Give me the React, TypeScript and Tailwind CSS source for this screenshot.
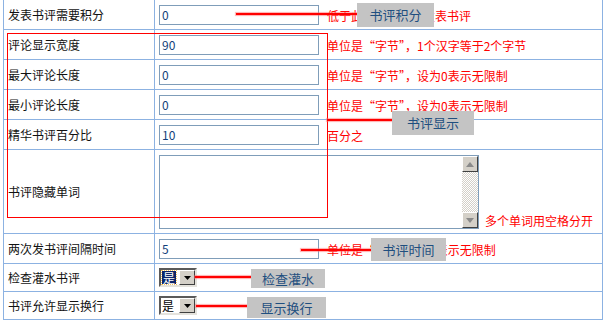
import React from "react";

const FONT = "font-['SimSun','Noto_Sans_CJK_SC',sans-serif]";

function TextInput({ value }: { value: string }) {
  return (
    <div className="flex h-[20px] w-[160px] items-center border border-[#7f9db9] bg-white pl-[2px] text-[12px] leading-[14px] text-[#123f7a]">
      {value}
    </div>
  );
}

function Hint({ children }: { children: React.ReactNode }) {
  return <span className="ml-[8px] whitespace-nowrap pt-[3px] text-[12px] leading-[14px] text-[#ff0000]">{children}</span>;
}

function Select({ focused }: { focused?: boolean }) {
  return (
    <div className="flex h-[19px] w-[38px] border-2 border-t-[#5a5a5a] border-l-[#5a5a5a] border-r-[#e4e2dc] border-b-[#e4e2dc] bg-white">
      <div className="flex flex-1 items-center pl-[1px]">
        {focused ? (
          <span className="flex h-[13px] items-center bg-[#0a246a] px-[1px] text-[12px] leading-[12px] text-white outline-1 outline-dotted outline-[#f0c060]">是</span>
        ) : (
          <span className="text-[12px] leading-[12px] text-black">是</span>
        )}
      </div>
      <div className="flex w-[16px] items-center justify-center border border-t-white border-l-white border-r-[#404040] border-b-[#404040] bg-[#d4d0c8]">
        <svg width="7" height="4" viewBox="0 0 7 4"><path d="M0 0H7L3.5 4Z" fill="#000" /></svg>
      </div>
    </div>
  );
}

function ScrollBtn({ up }: { up?: boolean }) {
  return (
    <div className="flex h-[16px] w-[16px] items-center justify-center border border-t-white border-l-white border-r-[#404040] border-b-[#404040] bg-[#d4d0c8]">
      <svg width="8" height="5" viewBox="0 0 8 5">
        {up ? <path d="M0 5H8L4 0Z" fill="#8a8a8a" /> : <path d="M0 0H8L4 5Z" fill="#8a8a8a" />}
      </svg>
    </div>
  );
}

function Row({ label, h, children, alignEnd }: { label: string; h: string; children?: React.ReactNode; alignEnd?: boolean }) {
  return (
    <div className={`flex border-b border-[#8cb2e2] ${h}`}>
      <div className="flex w-[151px] shrink-0 items-center border-r border-[#8cb2e2] pl-[4px] text-[12px] leading-[14px] text-[#111]">{label}</div>
      <div className={`flex flex-1 pl-[4px] ${alignEnd ? "items-start pt-[5px]" : "items-center"}`}>{children}</div>
    </div>
  );
}

function Tag({ text, cls }: { text: string; cls: string }) {
  return (
    <div className={`absolute flex items-center justify-center bg-[#c4c4c4] text-[13px] leading-[14px] text-[#1f4f7f] ${cls}`}>{text}</div>
  );
}

function Line({ cls }: { cls: string }) {
  return <div className={`absolute h-[2px] bg-[#ff0000] shadow-[0_0_1px_1px_rgba(255,110,110,0.55)] ${cls}`} />;
}

export default function App() {
  return (
    <div className={`relative h-[321px] w-[606px] overflow-hidden bg-white ${FONT}`}>
      <div className="ml-[3px] w-[600px] border-x border-[#8cb2e2]">
        <Row label="发表书评需要积分" h="h-[30px]">
          <TextInput value="0" />
          <Hint>低于此积分者不能发表书评</Hint>
        </Row>
        <Row label="评论显示宽度" h="h-[30px]">
          <TextInput value="90" />
          <Hint>单位是“字节”，1个汉字等于2个字节</Hint>
        </Row>
        <Row label="最大评论长度" h="h-[30px]">
          <TextInput value="0" />
          <Hint>单位是“字节”，设为0表示无限制</Hint>
        </Row>
        <Row label="最小评论长度" h="h-[30px]">
          <TextInput value="0" />
          <Hint>单位是“字节”，设为0表示无限制</Hint>
        </Row>
        <Row label="精华书评百分比" h="h-[30px]">
          <TextInput value="10" />
          <Hint>百分之</Hint>
        </Row>
        <Row label="书评隐藏单词" h="h-[84px]" alignEnd>
          <div className="flex items-end">
            <div className="flex h-[74px] w-[320px] border border-[#7f9db9] bg-white">
              <div className="flex-1" />
              <div className="flex w-[16px] flex-col bg-[repeating-conic-gradient(#d4d0c8_0_25%,#ffffff_0_50%)] bg-[length:2px_2px]">
                <ScrollBtn up />
                <div className="flex-1" />
                <ScrollBtn />
              </div>
            </div>
            <span className="ml-[6px] mb-[1px] whitespace-nowrap text-[12px] leading-[14px] text-[#ff0000]">多个单词用空格分开</span>
          </div>
        </Row>
        <Row label="两次发书评间隔时间" h="h-[30px]">
          <TextInput value="5" />
          <Hint>单位是“秒”，设为0表示无限制</Hint>
        </Row>
        <Row label="检查灌水书评" h="h-[28px]">
          <Select focused />
        </Row>
        <Row label="书评允许显示换行" h="h-[28px]">
          <Select />
        </Row>
      </div>

      <div className="absolute left-[7px] top-[33px] h-[185px] w-[321px] shadow-[inset_0_0_0_1px_#ff0000]" />

      <Line cls="left-[236px] top-[13px] w-[121px]" />
      <Line cls="left-[327px] top-[119px] w-[65px]" />
      <Line cls="left-[301px] top-[249px] w-[70px]" />
      <Line cls="left-[195px] top-[276px] w-[56px]" />
      <Line cls="left-[196px] top-[305px] w-[51px]" />

      <Tag text="书评积分" cls="left-[357px] top-[3px] h-[24px] w-[77px]" />
      <Tag text="书评显示" cls="left-[392px] top-[111px] h-[24px] w-[82px]" />
      <Tag text="书评时间" cls="left-[371px] top-[238px] h-[23px] w-[75px]" />
      <Tag text="检查灌水" cls="left-[251px] top-[269px] h-[19px] w-[74px]" />
      <Tag text="显示换行" cls="left-[247px] top-[297px] h-[21px] w-[79px]" />
    </div>
  );
}
